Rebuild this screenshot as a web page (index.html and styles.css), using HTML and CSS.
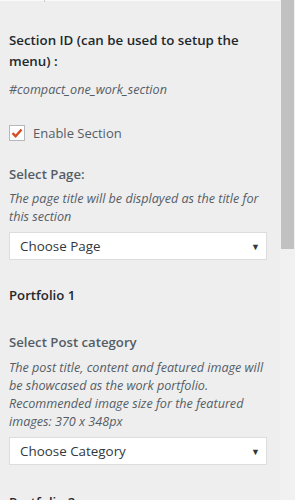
FILE: index.html
```html
<!DOCTYPE html>
<html lang="en">
<head>
    <meta charset="UTF-8">
    <meta name="viewport" content="width=device-width, initial-scale=1.0">
    <title>Section Settings</title>
    <link rel="stylesheet" href="styles.css">
</head>
<body>
    <div class="frame">
        <div class="panel">
            <div class="topline"><span class="tick"></span></div>

            <div class="control">
                <h3 class="title">Section ID (can be used to setup the menu) :</h3>
                <p class="desc id-text">#compact_one_work_section</p>
            </div>

            <div class="control">
                <label class="check">
                    <span class="box">
                        <svg width="12" height="10" viewBox="0 0 12 10"><path d="M1.5 5.2 L4.6 8.2 L10.5 1.5" fill="none" stroke="#d54e21" stroke-width="2.4"/></svg>
                    </span>
                    Enable Section
                </label>
            </div>

            <div class="control">
                <span class="label">Select Page:</span>
                <p class="desc">The page title will be displayed as the title for this section</p>
                <div class="select">Choose Page <span class="arrow">&#9660;</span></div>
            </div>

            <div class="control">
                <h3 class="heading">Portfolio 1</h3>
            </div>

            <div class="control">
                <span class="label label-post">Select Post category</span>
                <p class="desc">The post title, content and featured image will be showcased as the work portfolio. Recommended image size for the featured images: 370 x 348px</p>
                <div class="select">Choose Category <span class="arrow">&#9660;</span></div>
            </div>

            <div class="control">
                <h3 class="heading last">Portfolio 2</h3>
            </div>
        </div>
        <div class="scrollbar">
            <div class="thumb"></div>
        </div>
    </div>
</body>
</html>
```

FILE: styles.css
```css
* {
    margin: 0;
    padding: 0;
    box-sizing: border-box;
}

body {
    font-family: "Open Sans", "Noto Sans", sans-serif;
    background-color: #fff;
    overflow: hidden;
}

.frame {
    display: flex;
    width: 307px;
    height: 500px;
}

.panel {
    width: 280px;
    background-color: #eee;
    padding: 0 0 0 9px;
    overflow: hidden;
}

.topline {
    height: 2px;
    margin-left: -9px;
    border-top: 1px solid #fafafa;
    position: relative;
}

.tick {
    position: absolute;
    left: 44px;
    top: -1px;
    width: 1px;
    height: 2px;
    background-color: #ccc;
}

.scrollbar {
    width: 15px;
    background-color: #f1f1f1;
}

.thumb {
    margin-left: 1px;
    width: 13px;
    height: 249px;
    background-color: #c1c1c1;
}

.control {
    padding-right: 10px;
}

.title {
    margin-top: 28px;
    font-size: 13.3px;
    font-weight: 600;
    line-height: 21px;
    color: #23282d;
}

.desc {
    margin-top: 6px;
    font-size: 12.6px;
    font-style: italic;
    line-height: 18px;
    color: #555d66;
}

.id-text {
    margin-top: 9px;
}

.check {
    display: flex;
    align-items: center;
    margin-top: 25px;
    font-size: 13px;
    color: #555d66;
}

.box {
    display: flex;
    align-items: center;
    justify-content: center;
    width: 16px;
    height: 16px;
    margin-right: 8px;
    background-color: #fff;
    border: 1px solid #b4b9be;
}

.label {
    display: block;
    margin-top: 22px;
    font-size: 13.2px;
    font-weight: 600;
    line-height: 20px;
    color: #555d66;
}

.label-post {
    margin-top: 27px;
}

.label-post + .desc {
    margin-top: 7px;
}

.select {
    display: flex;
    justify-content: space-between;
    align-items: center;
    width: 258px;
    height: 28px;
    margin-top: 6px;
    padding: 0 6px 0 10px;
    background-color: #fff;
    border: 1px solid #ddd;
    font-size: 13.4px;
    color: #32373c;
}

.arrow {
    font-size: 9px;
    color: #32373c;
}

.heading {
    margin-top: 25px;
    font-size: 13.2px;
    font-weight: 600;
    line-height: 20px;
    color: #23282d;
}

.heading.last {
    margin-top: 27px;
}
```
